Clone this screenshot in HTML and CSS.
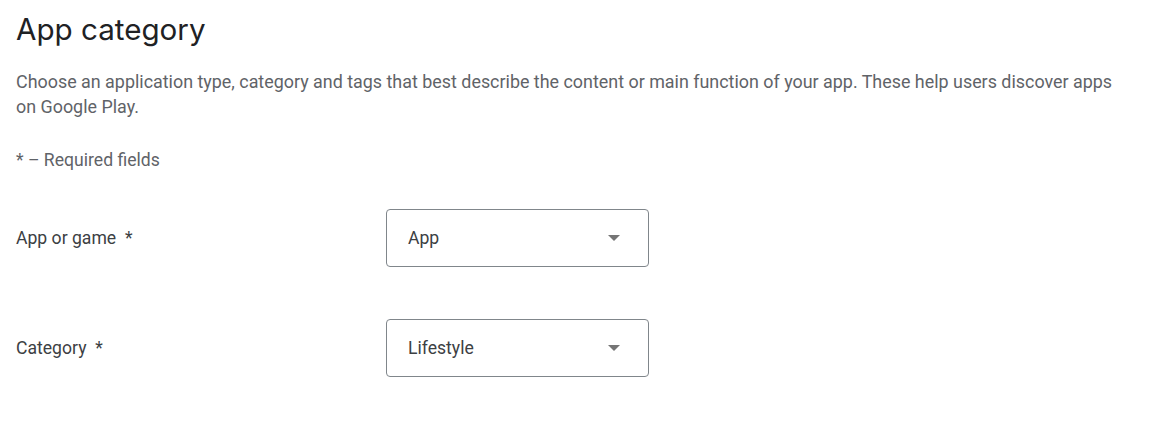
FILE: index.html
```html
<!DOCTYPE html>
<html lang="en">
<head>
<meta charset="utf-8">
<title>App category</title>
<link rel="stylesheet" href="styles.css">
</head>
<body>
<main class="page">
  <h1 class="title">App category</h1>
  <p class="desc">Choose an application type, category and tags that best describe the content or main function of your app. These help users discover apps on Google Play.</p>
  <p class="req">* – Required fields</p>
  <div class="row">
    <div class="label">App or game&nbsp; *</div>
    <div class="select"><span class="value">App</span><span class="arrow"></span></div>
  </div>
  <div class="row">
    <div class="label">Category&nbsp; *</div>
    <div class="select"><span class="value">Lifestyle</span><span class="arrow"></span></div>
  </div>
</main>
</body>
</html>
```
FILE: styles.css
```css
html, body { margin: 0; padding: 0; background: #fff; }
body { font-family: Roboto, "Liberation Sans", Arial, sans-serif; }
.page { padding: 11px 16px 0 16px; width: 1120px; }
.title {
  margin: 0;
  font-family: Inter, "Open Sans", Roboto, sans-serif;
  font-weight: 400;
  font-size: 29.6px;
  line-height: 36px;
  color: #202124;
}
.desc {
  margin: 21.5px 0 0 0;
  font-size: 17.9px;
  line-height: 25px;
  color: #5f6368;
}
.req {
  margin: 29px 0 0 0;
  font-size: 17.6px;
  line-height: 25px;
  color: #5f6368;
}
.row {
  display: flex;
  align-items: center;
  margin-top: 36px;
}
.row + .row { margin-top: 52px; }
.label {
  width: 370px;
  font-size: 17.6px;
  color: #3c4043;
}
.select {
  box-sizing: border-box;
  width: 263px;
  height: 58px;
  border: 1px solid #80868b;
  border-radius: 4px;
  display: flex;
  align-items: center;
  padding: 0 28px 0 21px;
}
.value { flex: 1; font-size: 17.6px; color: #3c4043; }
.arrow {
  width: 0; height: 0;
  border-left: 6px solid transparent;
  border-right: 6px solid transparent;
  border-top: 6px solid #757575;
}
```
